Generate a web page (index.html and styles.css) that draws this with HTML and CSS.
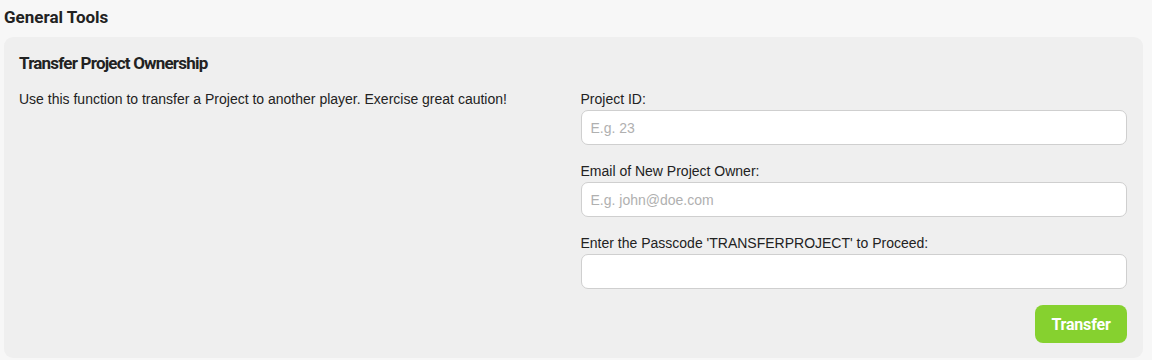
FILE: index.html
```html
<!DOCTYPE html>
<html>
<head>
<meta charset="utf-8">
<link rel="stylesheet" href="styles.css">
</head>
<body>
<h2 class="page-title">General Tools</h2>
<section class="card">
  <h3 class="card-title">Transfer Project Ownership</h3>
  <div class="card-body">
    <p class="desc">Use this function to transfer a Project to another player. Exercise great caution!</p>
    <form class="form">
      <label class="field">
        <span class="label">Project ID:</span>
        <input class="input" type="text" placeholder="E.g. 23">
      </label>
      <label class="field">
        <span class="label">Email of New Project Owner:</span>
        <input class="input" type="text" placeholder="E.g. john@doe.com">
      </label>
      <label class="field">
        <span class="label">Enter the Passcode 'TRANSFERPROJECT' to Proceed:</span>
        <input class="input" type="text">
      </label>
      <div class="actions">
        <button class="btn" type="button">Transfer</button>
      </div>
    </form>
  </div>
</section>
</body>
</html>
```
FILE: styles.css
```css
html, body {
  margin: 0;
  padding: 0;
  background: #f7f7f7;
}
body {
  padding: 7px 9px 0 4px;
  font-family: "Liberation Sans", Arial, sans-serif;
  font-size: 14px;
  color: #222;
}
.page-title {
  margin: 0;
  font-family: Roboto, "Liberation Sans", sans-serif;
  font-weight: 700;
  font-size: 17px;
  line-height: 20px;
  color: #222;
}
.card {
  margin-top: 10px;
  background: #efefef;
  border-radius: 9px;
  padding: 16px 16px 15px 15px;
}
.card-title {
  margin: 0 0 16px;
  font-family: Roboto, "Liberation Sans", sans-serif;
  font-weight: 700;
  font-size: 17px;
  line-height: 20px;
  letter-spacing: -0.8px;
  color: #222;
}
.card-body {
  display: grid;
  grid-template-columns: 1fr 1fr;
  column-gap: 15px;
}
.desc {
  margin: 0;
  line-height: 20px;
}
.form {
  margin: 0;
  display: flex;
  flex-direction: column;
}
.field {
  display: flex;
  flex-direction: column;
  margin-bottom: 16px;
}
.label {
  line-height: 20px;
  margin-bottom: 1px;
}
.input {
  box-sizing: border-box;
  height: 35px;
  border: 1px solid #cfcfcf;
  border-radius: 7px;
  background: #fff;
  padding: 0 9px;
  font-family: "Liberation Sans", Arial, sans-serif;
  font-size: 14px;
  color: #222;
  outline: none;
}
.input::placeholder {
  color: #b0b0b0;
}
.actions {
  display: flex;
  justify-content: flex-end;
}
.btn {
  height: 38px;
  width: 92px;
  border: none;
  border-radius: 8px;
  background: #86d12f;
  color: #fff;
  font-family: Roboto, "Liberation Sans", sans-serif;
  font-weight: 700;
  font-size: 16px;
  letter-spacing: -0.2px;
  cursor: pointer;
}
```
